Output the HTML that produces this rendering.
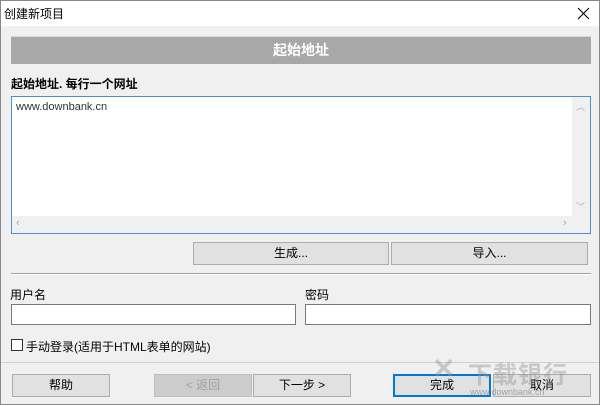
<!DOCTYPE html>
<html><head><meta charset="utf-8"><style>
*{margin:0;padding:0;box-sizing:border-box}
body{width:600px;height:405px;background:#f0f0f0;font-family:"Liberation Sans","Noto Sans CJK SC",sans-serif;font-size:12px;color:#000;position:relative;overflow:hidden;}
.a{position:absolute}
.btn{position:absolute;background:#e1e1e1;border:1px solid #adadad;text-align:center;line-height:21px;font-size:12px}
.inp{position:absolute;background:#fff;border:1px solid #7a7a7a}
</style></head><body>
<div class="a" style="left:0;top:0;width:600px;height:405px;border:1px solid #888;z-index:5;pointer-events:none"></div>
<div class="a" style="left:0;top:0;width:600px;height:26px;background:#fff"></div>
<div class="a" style="left:4px;top:5px;font-size:12px">创建新项目</div>
<svg class="a" style="left:577px;top:7px" width="13" height="13"><path d="M1 1L12 12M12 1L1 12" stroke="#000" stroke-width="1.1"/></svg>
<div class="a" style="left:11px;top:36px;width:580px;height:28px;background:#a8a8a8;border-top:1px solid #d8d8d8;color:#fff;font-weight:bold;font-size:14px;text-align:center;line-height:27px">起始地址</div>
<div class="a" style="left:11px;top:75px;font-weight:bold;font-size:12px">起始地址. 每行一个网址</div>
<div class="a" style="left:11px;top:96px;width:580px;height:138px;background:#fff;border:1px solid #4c8fd4"></div>
<div class="a" style="left:16px;top:101px;font-size:11px;color:#333">www.downbank.cn</div>
<div class="a" style="left:572px;top:97px;width:18px;height:119px;background:#f0f0f0"></div>
<div class="a" style="left:12px;top:216px;width:578px;height:17px;background:#f0f0f0"></div>
<div class="a" style="left:576px;top:100px;color:#aaa;font-size:9px">︿</div>
<div class="a" style="left:576px;top:200px;color:#aaa;font-size:9px">﹀</div>
<div class="a" style="left:16px;top:217px;color:#aaa;font-size:11px">‹</div>
<div class="a" style="left:563px;top:217px;color:#aaa;font-size:11px">›</div>
<div class="btn" style="left:193px;top:242px;width:196px;height:23px">生成...</div>
<div class="btn" style="left:391px;top:242px;width:197px;height:23px">导入...</div>
<div class="a" style="left:11px;top:273px;width:580px;height:2px;border-top:1px solid #a0a0a0;border-bottom:1px solid #fff"></div>
<div class="a" style="left:10px;top:286px">用户名</div>
<div class="a" style="left:305px;top:286px">密码</div>
<div class="inp" style="left:11px;top:304px;width:285px;height:21px"></div>
<div class="inp" style="left:305px;top:304px;width:286px;height:21px"></div>
<div class="a" style="left:11px;top:339px;width:12px;height:12px;background:#fff;border:1px solid #333"></div>
<div class="a" style="left:26px;top:338px">手动登录(适用于HTML表单的网站)</div>
<div class="a" style="left:0;top:362px;width:600px;height:1px;background:#d0d0d0"></div>
<div class="btn" style="left:12px;top:374px;width:98px;height:23px">帮助</div>
<div class="btn" style="left:154px;top:374px;width:98px;height:23px;background:#cccccc;border-color:#bfbfbf;color:#a0a0a0">&lt; 返回</div>
<div class="btn" style="left:253px;top:374px;width:98px;height:23px">下一步 &gt;</div>
<div class="btn" style="left:393px;top:374px;width:98px;height:23px;border:2px solid #0078d7;line-height:19px">完成</div>
<div class="btn" style="left:493px;top:374px;width:98px;height:23px">取消</div>
<div class="a" style="left:432px;top:352px;font-size:28px;font-weight:bold;color:rgba(150,150,150,0.45)">✕</div>
<div class="a" style="left:468px;top:355px;font-size:24px;font-weight:bold;color:rgba(150,150,150,0.45);letter-spacing:1px">下载银行</div>
<div class="a" style="left:470px;top:387px;font-size:9px;color:rgba(120,120,120,0.6)">www.downbank.cn</div>
</body></html>
